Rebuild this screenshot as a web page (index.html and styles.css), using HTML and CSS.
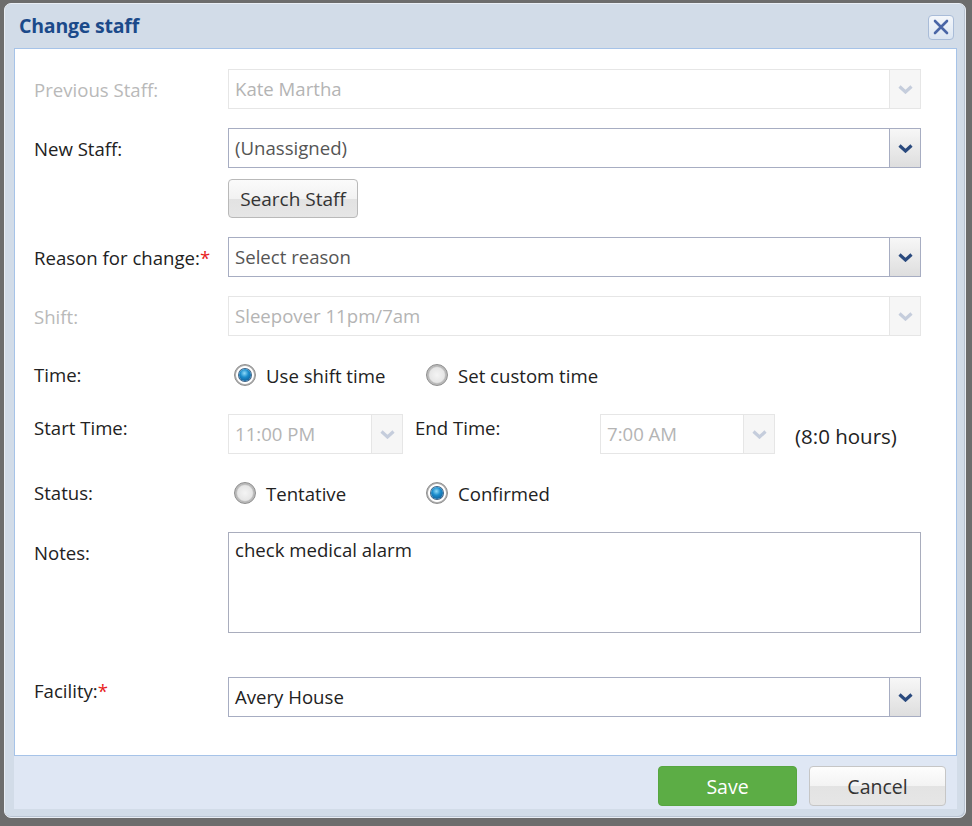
FILE: index.html
```html
<!DOCTYPE html>
<html lang="en">
<head>
    <meta charset="UTF-8">
    <meta name="viewport" content="width=device-width, initial-scale=1.0">
    <title>Change staff</title>
    <link rel="stylesheet" href="styles.css">
</head>
<body>
    <div class="window">
        <div class="titlebar">
            <span class="title">Change staff</span>
            <button class="close-btn" aria-label="Close">
                <svg width="18" height="18" viewBox="0 0 18 18"><path d="M3 3 L15 15 M15 3 L3 15" stroke="#4a66a6" stroke-width="2.6" stroke-linecap="round"/></svg>
            </button>
        </div>

        <div class="content">
            <div class="form-row">
                <div class="label disabled">Previous Staff:</div>
                <div class="field">
                    <div class="select is-disabled">
                        <span class="select-text">Kate Martha</span>
                        <span class="select-arrow"><svg width="15" height="9" viewBox="0 0 15 9"><path d="M1.5 1.5 L7.5 7 L13.5 1.5" fill="none" stroke="#c5cddc" stroke-width="3.2"/></svg></span>
                    </div>
                </div>
            </div>

            <div class="form-row">
                <div class="label">New Staff:</div>
                <div class="field">
                    <div class="select">
                        <span class="select-text muted">(Unassigned)</span>
                        <span class="select-arrow"><svg width="15" height="9" viewBox="0 0 15 9"><path d="M1.5 1.5 L7.5 7 L13.5 1.5" fill="none" stroke="#2a4a7e" stroke-width="3.2"/></svg></span>
                    </div>
                    <button class="btn search-btn">Search Staff</button>
                </div>
            </div>

            <div class="form-row">
                <div class="label">Reason for change:<span class="req">*</span></div>
                <div class="field">
                    <div class="select">
                        <span class="select-text muted">Select reason</span>
                        <span class="select-arrow"><svg width="15" height="9" viewBox="0 0 15 9"><path d="M1.5 1.5 L7.5 7 L13.5 1.5" fill="none" stroke="#2a4a7e" stroke-width="3.2"/></svg></span>
                    </div>
                </div>
            </div>

            <div class="form-row">
                <div class="label disabled">Shift:</div>
                <div class="field">
                    <div class="select is-disabled">
                        <span class="select-text">Sleepover 11pm/7am</span>
                        <span class="select-arrow"><svg width="15" height="9" viewBox="0 0 15 9"><path d="M1.5 1.5 L7.5 7 L13.5 1.5" fill="none" stroke="#c5cddc" stroke-width="3.2"/></svg></span>
                    </div>
                </div>
            </div>

            <div class="form-row row-center">
                <div class="label">Time:</div>
                <div class="field radios">
                    <label class="radio-opt"><span class="radio checked"></span>Use shift time</label>
                    <label class="radio-opt"><span class="radio"></span>Set custom time</label>
                </div>
            </div>

            <div class="form-row">
                <div class="label high">Start Time:</div>
                <div class="field time-field">
                    <div class="select is-disabled time-select">
                        <span class="select-text">11:00 PM</span>
                        <span class="select-arrow"><svg width="15" height="9" viewBox="0 0 15 9"><path d="M1.5 1.5 L7.5 7 L13.5 1.5" fill="none" stroke="#c5cddc" stroke-width="3.2"/></svg></span>
                    </div>
                    <div class="label high end-label">End Time:</div>
                    <div class="select is-disabled time-select">
                        <span class="select-text">7:00 AM</span>
                        <span class="select-arrow"><svg width="15" height="9" viewBox="0 0 15 9"><path d="M1.5 1.5 L7.5 7 L13.5 1.5" fill="none" stroke="#c5cddc" stroke-width="3.2"/></svg></span>
                    </div>
                    <span class="hours">(8:0 hours)</span>
                </div>
            </div>

            <div class="form-row row-center">
                <div class="label">Status:</div>
                <div class="field radios">
                    <label class="radio-opt"><span class="radio"></span>Tentative</label>
                    <label class="radio-opt"><span class="radio checked"></span>Confirmed</label>
                </div>
            </div>

            <div class="form-row notes-row">
                <div class="label">Notes:</div>
                <div class="field">
                    <div class="textarea">check medical alarm</div>
                </div>
            </div>

            <div class="form-row">
                <div class="label high">Facility:<span class="req">*</span></div>
                <div class="field">
                    <div class="select">
                        <span class="select-text">Avery House</span>
                        <span class="select-arrow"><svg width="15" height="9" viewBox="0 0 15 9"><path d="M1.5 1.5 L7.5 7 L13.5 1.5" fill="none" stroke="#2a4a7e" stroke-width="3.2"/></svg></span>
                    </div>
                </div>
            </div>
        </div>

        <div class="footer">
            <button class="btn save-btn">Save</button>
            <button class="btn cancel-btn">Cancel</button>
        </div>
    </div>
</body>
</html>
```

FILE: styles.css
```css
* {
    margin: 0;
    padding: 0;
    box-sizing: border-box;
    font-family: "Open Sans", "Noto Sans", sans-serif;
}
body {
    background-color: #6d6d6d;
    padding: 3px 6px 9px 4px;
    color: #222;
    font-size: 18.6px;
}
.window {
    background-color: #d2dce8;
    border: 1px solid #e9eef5;
    border-radius: 7px;
    padding: 0 8px 8px 9px;
    box-shadow: inset -1px -1px 0 #b9c4d2;
}
.titlebar {
    height: 44px;
    display: flex;
    align-items: center;
    justify-content: space-between;
    padding: 0 3px 0 5px;
}
.title {
    font-size: 19.5px;
    font-weight: bold;
    color: #1b4a8a;
    letter-spacing: -0.2px;
    margin-top: -1px;
}
.close-btn {
    width: 26px;
    height: 25px;
    border: 1px solid #a9bcd8;
    border-radius: 4px;
    background: linear-gradient(#f4f7fb, #dbe5f1);
    display: flex;
    align-items: center;
    justify-content: center;
    margin-top: 2px;
}
.content {
    background-color: #fff;
    border: 1px solid #a6c3e8;
    padding: 20px 35px 0 19px;
    height: 708px;
    display: flex;
    flex-direction: column;
    gap: 19px;
}
.form-row {
    display: flex;
    min-height: 40px;
}
.label {
    width: 194px;
    flex-shrink: 0;
    padding-top: 10px;
    line-height: 22px;
    color: #222;
}
.label.high {
    padding-top: 3px;
}
.label.disabled {
    color: #b9b9b9;
}
.req {
    color: #e8221c;
}
.row-center {
    align-items: center;
}
.row-center .label {
    padding-top: 0;
}
.field {
    flex: 1;
    display: flex;
    flex-direction: column;
    align-items: flex-start;
    gap: 11px;
}
.select {
    width: 100%;
    height: 40px;
    display: flex;
    border: 1px solid #a7adc2;
    background: #fff;
}
.select-text {
    flex: 1;
    padding-left: 6px;
    line-height: 38px;
    color: #222;
    white-space: nowrap;
    overflow: hidden;
}
.select-text.muted {
    color: #555;
}
.select-arrow {
    width: 31px;
    border-left: 1px solid #a7adc2;
    background: linear-gradient(#f7f7f7, #dedede);
    display: flex;
    align-items: center;
    justify-content: center;
}
.select.is-disabled {
    border-color: #e6e6e6;
}
.select.is-disabled .select-text {
    color: #b4b4b4;
}
.select.is-disabled .select-arrow {
    border-left-color: #e6e6e6;
    background: #f6f6f6;
}
.btn {
    font-size: 19.5px;
    cursor: pointer;
}
.search-btn {
    width: 130px;
    height: 39px;
    border: 1px solid #b9b9b9;
    border-radius: 4px;
    background: linear-gradient(#fbfbfb 0%, #f2f2f2 50%, #e2e2e2 51%, #e6e6e6 100%);
    color: #333;
    font-size: 19px;
}
.radios {
    flex-direction: row;
    align-items: center;
    gap: 0;
    padding-left: 6px;
}
.radio-opt {
    width: 192px;
    display: flex;
    align-items: center;
    gap: 10px;
    color: #222;
}
.radio {
    width: 22px;
    height: 22px;
    border-radius: 50%;
    border: 1px solid #8e8e8e;
    background: radial-gradient(circle, #f4f4f4 0%, #e6e6e6 52%, #b7b7b7 62%, #d4d4d4 100%);
    display: flex;
    align-items: center;
    justify-content: center;
}
.radio.checked {
    background: radial-gradient(circle, #fff 0%, #fff 60%, #b2b2b2 66%, #d0d0d0 100%);
}
.radio.checked::after {
    content: "";
    width: 12px;
    height: 12px;
    border-radius: 50%;
    background: radial-gradient(circle at 45% 35%, #8fdaf8 0%, #1b8ccc 40%, #0b4a82 100%);
    box-shadow: 0 0 0 1px #3d6386;
}
.time-field {
    flex-direction: row;
    align-items: flex-start;
    gap: 0;
}
.time-select {
    width: 175px;
    flex-shrink: 0;
}
.end-label {
    width: 197px;
    padding-left: 12px;
}
.hours {
    margin-left: 20px;
    height: 40px;
    padding-top: 5px;
    line-height: 35px;
    font-size: 20.5px;
    color: #222;
}
.notes-row {
    margin-bottom: 25px;
}
.textarea {
    width: 100%;
    height: 101px;
    border: 1px solid #a9adbd;
    padding: 5px 6px;
    line-height: 24px;
    color: #222;
}
.footer {
    height: 53px;
    background-color: #dfe7f4;
    display: flex;
    justify-content: flex-end;
    align-items: flex-start;
    padding: 10px 11px 0 0;
    gap: 12px;
}
.save-btn {
    width: 139px;
    height: 40px;
    border: 1px solid #57a640;
    border-radius: 4px;
    background: #5cad45;
    color: #fff;
}
.cancel-btn {
    width: 137px;
    height: 40px;
    border: 1px solid #c6c6c6;
    border-radius: 4px;
    background: linear-gradient(#fdfdfd 0%, #f3f3f3 50%, #e3e3e3 51%, #e6e6e6 100%);
    color: #333;
}
```
